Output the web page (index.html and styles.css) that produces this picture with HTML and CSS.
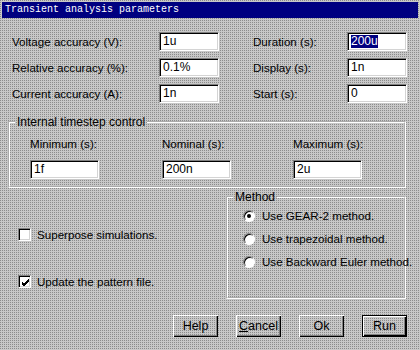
FILE: index.html
```html
<!DOCTYPE html>
<html>
<head>
<meta charset="utf-8">
<link rel="stylesheet" href="styles.css">
</head>
<body>
<div class="dialog">
  <div class="titlebar">Transient analysis parameters</div>

  <div class="top">
    <span class="lbl">Voltage accuracy (V):</span>
    <div class="field">1u</div>
    <span></span>
    <span class="lbl">Duration (s):</span>
    <div class="field"><span class="sel">200u</span></div>

    <span class="lbl">Relative accuracy (%):</span>
    <div class="field">0.1%</div>
    <span></span>
    <span class="lbl">Display (s):</span>
    <div class="field">1n</div>

    <span class="lbl">Current accuracy (A):</span>
    <div class="field">1n</div>
    <span></span>
    <span class="lbl">Start (s):</span>
    <div class="field">0</div>
  </div>

  <fieldset class="group step">
    <legend>Internal timestep control</legend>
    <div class="steps">
      <div class="col"><span class="lbl">Minimum (s):</span><div class="field wide">1f</div></div>
      <div class="col"><span class="lbl">Nominal (s):</span><div class="field wide">200n</div></div>
      <div class="col"><span class="lbl">Maximum (s):</span><div class="field wide">2u</div></div>
    </div>
  </fieldset>

  <div class="middle">
    <div class="checks">
      <div class="check"><span class="box"></span><span class="lbl">Superpose simulations.</span></div>
      <div class="check"><span class="box"><svg width="9" height="9" viewBox="0 0 9 9"><path d="M1 4 L3 6 L8 1 M1 5 L3 7 L8 2 M1 6 L3 8 L8 3" stroke="#000" stroke-width="1" fill="none"/></svg></span><span class="lbl">Update the pattern file.</span></div>
    </div>
    <fieldset class="group method">
      <legend>Method</legend>
      <div class="radios">
        <div class="radio"><span class="dot on"></span><span class="lbl">Use GEAR-2 method.</span></div>
        <div class="radio"><span class="dot"></span><span class="lbl">Use trapezoidal method.</span></div>
        <div class="radio"><span class="dot"></span><span class="lbl">Use Backward Euler method.</span></div>
      </div>
    </fieldset>
  </div>

  <div class="buttons">
    <div class="btn">Help</div>
    <div class="btn"><u>C</u>ancel</div>
    <div class="btn">Ok</div>
    <div class="btn default">Run</div>
  </div>
</div>
</body>
</html>
```

FILE: styles.css
```css
html, body {
  margin: 0;
  padding: 0;
}
body {
  width: 420px;
  height: 350px;
  overflow: hidden;
  background: conic-gradient(from 0deg at 1px 1px, #c8c8c8 0deg 270deg, #8c8c8c 270deg 360deg) 0 0 / 2px 2px;
  font-family: "Liberation Sans", Arial, sans-serif;
  font-size: 11.6px;
  color: #000;
}
.dialog {
  width: 420px;
  height: 350px;
  display: flex;
  flex-direction: column;
}
.titlebar {
  margin: 2px 2px 0 2px;
  height: 16px;
  background: #000080;
  color: #fff;
  font-family: "Liberation Mono", monospace;
  font-size: 10px;
  line-height: 16px;
  padding-left: 3px;
  white-space: pre;
}
.lbl {
  line-height: 14px;
  white-space: nowrap;
}
.field {
  box-sizing: border-box;
  height: 19px;
  background: #fff;
  border: 1px solid;
  border-color: #808080 #fff #fff #808080;
  box-shadow: inset 1px 1px 0 #000, inset -1px -1px 0 #d4d4d4;
  padding: 0 0 0 3px;
  line-height: 17px;
  font-size: 12px;
  white-space: nowrap;
}
.sel {
  background: #000080;
  color: #fff;
  display: inline-block;
  line-height: 13px;
}
.top {
  display: grid;
  grid-template-columns: 147px 60px 34px 94px 60px;
  grid-auto-rows: 19px;
  row-gap: 7px;
  align-items: center;
  padding: 14px 0 0 12px;
}
.group {
  margin: 0;
  padding: 0;
  border: 2px groove #fff;
  min-width: 0;
}
.group legend {
  margin-left: 5px;
  padding: 0 2px;
  line-height: 14px;
  font-size: 12px;
}
.step {
  margin: 12px 14px 0 8px;
}
.steps {
  display: grid;
  grid-template-columns: 132px 131px 1fr;
  padding: 8px 0 7px 20px;
}
.col {
  display: flex;
  flex-direction: column;
  gap: 9px;
}
.field.wide {
  width: 69px;
}
.middle {
  display: flex;
  margin-top: 2px;
}
.checks {
  flex: 1;
  display: flex;
  flex-direction: column;
  gap: 34px;
  padding: 38px 0 0 18px;
}
.check {
  display: flex;
  align-items: center;
  gap: 6px;
  height: 13px;
}
.box {
  box-sizing: border-box;
  flex: 0 0 13px;
  width: 13px;
  height: 13px;
  background: #fff;
  border: 1px solid;
  border-color: #808080 #fff #fff #808080;
  box-shadow: inset 1px 1px 0 #000, inset -1px -1px 0 #d4d4d4;
  display: flex;
  align-items: center;
  justify-content: center;
  padding: 1px 0 0 1px;
}
.box svg { display: block; }
.method {
  width: 180px;
  flex: 0 0 180px;
  box-sizing: border-box;
  margin: 0 14px 0 0;
}
.radios {
  display: flex;
  flex-direction: column;
  gap: 9px;
  padding: 5px 0 28px 15px;
}
.radio {
  display: flex;
  align-items: center;
  gap: 7px;
  height: 14px;
}
.dot {
  box-sizing: border-box;
  flex: 0 0 12px;
  width: 12px;
  height: 12px;
  border-radius: 50%;
  background: #fff;
  border: 1px solid;
  border-color: #808080 #fff #fff #808080;
  box-shadow: inset 1px 1px 0 #000;
  display: flex;
  align-items: center;
  justify-content: center;
}
.dot.on::after {
  content: "";
  width: 4px;
  height: 4px;
  border-radius: 50%;
  background: #000;
}
.buttons {
  display: flex;
  justify-content: flex-end;
  gap: 18px;
  padding-right: 13px;
  margin-top: 16px;
}
.btn {
  box-sizing: border-box;
  width: 45px;
  height: 22px;
  display: flex;
  align-items: center;
  justify-content: center;
  font-size: 12.5px;
  box-shadow: inset 1px 1px 0 #fff, inset -1px -1px 0 #000, inset -2px -2px 0 #808080;
}
.btn u { text-decoration: underline; }
.btn.default {
  border: 1px solid #000;
  box-shadow: inset 1px 1px 0 #fff, inset -1px -1px 0 #000, inset -2px -2px 0 #808080;
}
```
